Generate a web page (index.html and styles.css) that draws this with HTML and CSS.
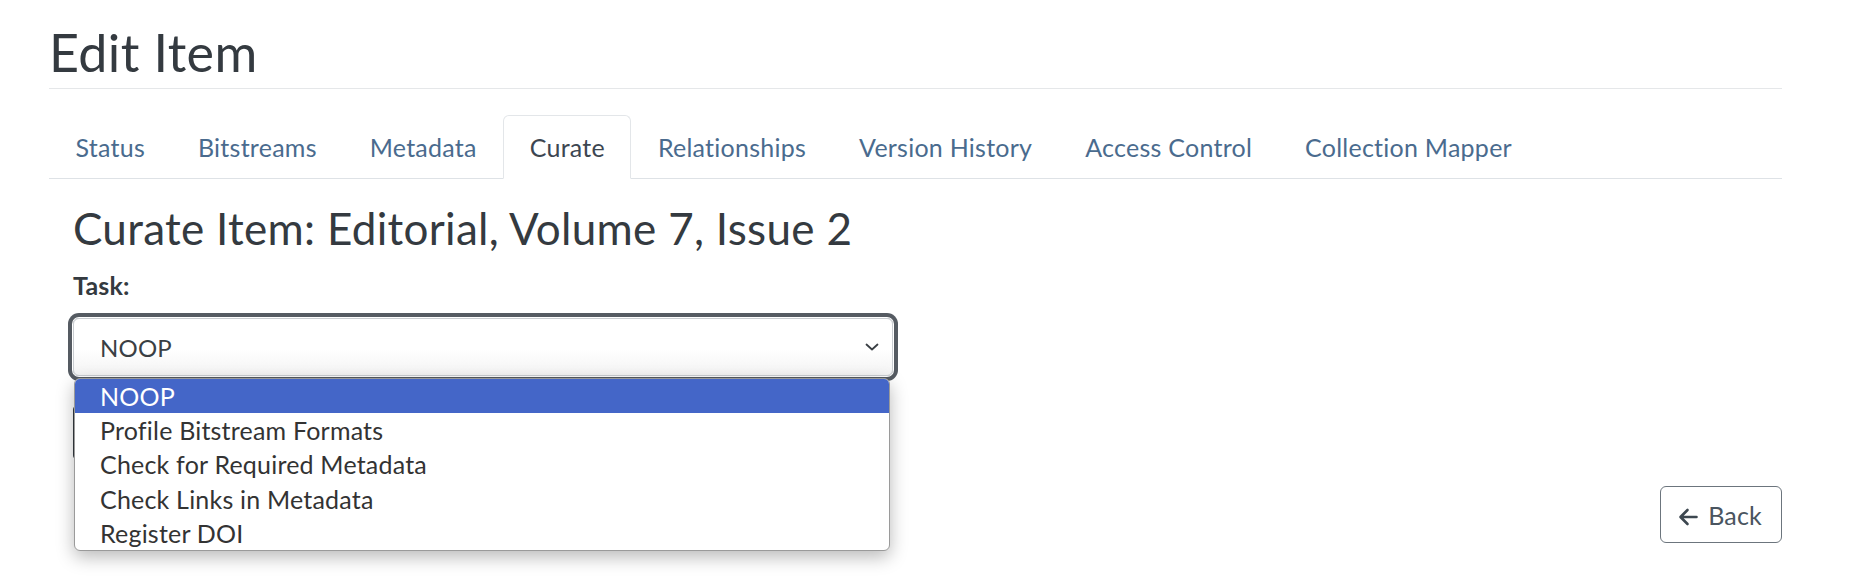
FILE: index.html
```html
<!DOCTYPE html>
<html lang="en">
<head>
    <meta charset="UTF-8">
    <meta name="viewport" content="width=device-width, initial-scale=1.0">
    <title>Edit Item</title>
    <link rel="stylesheet" href="styles.css">
</head>
<body>
    <div class="container">
        <h1 class="page-title">Edit Item</h1>

        <ul class="nav-tabs">
            <li class="tab">Status</li>
            <li class="tab">Bitstreams</li>
            <li class="tab">Metadata</li>
            <li class="tab active">Curate</li>
            <li class="tab">Relationships</li>
            <li class="tab">Version History</li>
            <li class="tab">Access Control</li>
            <li class="tab">Collection Mapper</li>
        </ul>

        <div class="tab-content">
            <h2 class="curate-title">Curate Item: Editorial, Volume 7, Issue 2</h2>
            <label class="task-label">Task:</label>

            <div class="select-wrap">
                <div class="select">
                    <span>NOOP</span>
                    <svg class="chevron" width="14" height="8" viewBox="0 0 14 8">
                        <path d="M1.5 1.5 L7 6.5 L12.5 1.5" fill="none" stroke="#3a3f44" stroke-width="1.8" stroke-linecap="round" stroke-linejoin="round"/>
                    </svg>
                </div>

                <!-- open select popup -->
                <ul class="options">
                    <li class="option selected">NOOP</li>
                    <li class="option">Profile Bitstream Formats</li>
                    <li class="option">Check for Required Metadata</li>
                    <li class="option">Check Links in Metadata</li>
                    <li class="option">Register DOI</li>
                </ul>
            </div>

            <button class="btn-start"></button>
        </div>

        <div class="actions">
            <button class="btn-back">
                <svg class="arrow" width="20" height="18" viewBox="0 0 20 18">
                    <path d="M18.5 9 H3 M9.5 2 L2.5 9 L9.5 16" fill="none" stroke="#3d4750" stroke-width="2.6" stroke-linecap="round" stroke-linejoin="round"/>
                </svg>
                Back
            </button>
        </div>
    </div>
</body>
</html>
```

FILE: styles.css
```css
body {
    font-family: Lato, "Open Sans", sans-serif;
    color: #343a40;
    background: #fff;
    margin: 0;
}
.container {
    padding: 0 68px 40px 49px;
}
.page-title {
    font-size: 52px;
    font-weight: 400;
    letter-spacing: 0.4px;
    line-height: 60px;
    margin: 22px 0 0;
    padding-bottom: 6px;
    border-bottom: 1px solid #e5e7e9;
}
.nav-tabs {
    list-style: none;
    display: flex;
    margin: 26px 0 0;
    padding: 0;
    border-bottom: 1px solid #dee2e6;
}
.tab {
    font-size: 25px;
    letter-spacing: 0.25px;
    line-height: 38px;
    padding: 12px 25.5px;
    color: #4a6b8e;
    border: 1px solid transparent;
    border-radius: 6px 6px 0 0;
    margin-bottom: -1px;
}
.tab.active {
    color: #3d4651;
    background: #fff;
    border-color: #e3e6e9 #e3e6e9 #fff;
}
.tab-content {
    padding-left: 24px;
    position: relative;
}
.curate-title {
    font-size: 44px;
    font-weight: 400;
    letter-spacing: 0.3px;
    line-height: 48px;
    margin: 25px 0 0;
}
.task-label {
    display: block;
    font-size: 25px;
    font-weight: 700;
    letter-spacing: 0.2px;
    line-height: 36px;
    margin-top: 15px;
}
.select-wrap {
    position: relative;
    width: 820px;
    margin-top: 15px;
}
.select {
    height: 56px;
    border: 1px solid #c9cdd1;
    border-radius: 6px;
    background: linear-gradient(#fff 55%, #f3f3f3);
    box-shadow: 0 0 0 1px #fff, 0 0 0 5px #555b62;
    display: flex;
    align-items: center;
    justify-content: space-between;
    padding: 0 13px 0 26px;
    font-size: 24px;
    letter-spacing: 0.2px;
    color: #3a3f44;
}
.chevron {
    display: block;
}
.options {
    position: absolute;
    top: 60px;
    left: 1px;
    width: 814px;
    margin: 0;
    padding: 0;
    list-style: none;
    background: #fff;
    border: 1px solid #9a9a9a;
    border-radius: 6px;
    overflow: hidden;
    box-shadow: 0 6px 18px rgba(0, 0, 0, 0.28);
    z-index: 2;
}
.option {
    font-size: 25px;
    letter-spacing: 0.2px;
    line-height: 34.2px;
    padding-left: 25px;
    color: #333;
}
.option.selected {
    background: #4466c8;
    color: #fff;
}
.btn-start {
    display: block;
    margin-top: 28px;
    width: 120px;
    height: 57px;
    background: #343a40;
    border: 1px solid #343a40;
    border-radius: 6px;
}
.actions {
    display: flex;
    justify-content: flex-end;
    margin-top: 25px;
}
.btn-back {
    display: flex;
    align-items: center;
    gap: 10px;
    height: 57px;
    padding: 0 19px 0 17px;
    font-family: inherit;
    font-size: 25px;
    letter-spacing: 0.2px;
    color: #4a5560;
    background: #fff;
    border: 1px solid #6c757d;
    border-radius: 6px;
}
.arrow {
    margin-top: 4px;
}
```
